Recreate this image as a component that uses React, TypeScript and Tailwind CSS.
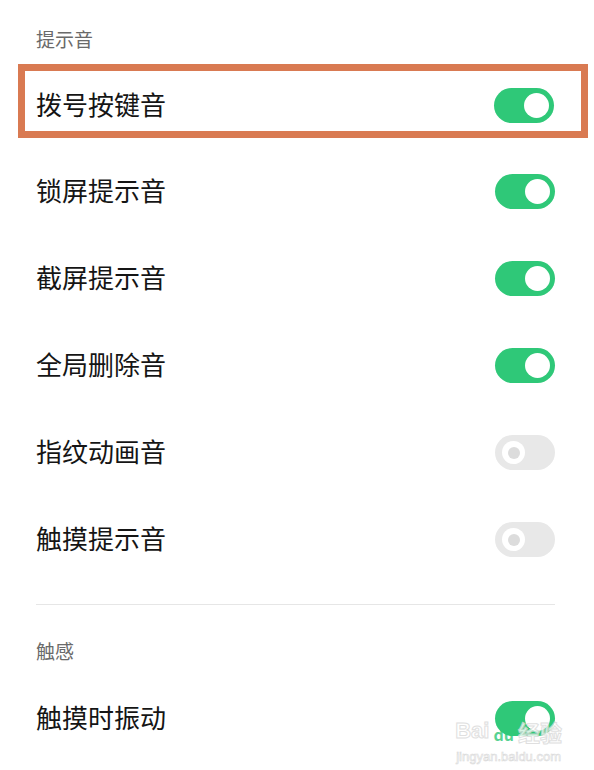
import React from 'react'

interface Item {
  label: string
  on: boolean
}

const soundItems: Item[] = [
  { label: '锁屏提示音', on: true },
  { label: '截屏提示音', on: true },
  { label: '全局删除音', on: true },
  { label: '指纹动画音', on: false },
  { label: '触摸提示音', on: false },
]

function Toggle({ on }: { on: boolean }) {
  if (on) {
    return (
      <div className="flex h-[35px] w-[60px] shrink-0 items-center justify-end rounded-full bg-[#2fc878] pr-[5px]">
        <div className="h-[25px] w-[25px] rounded-full bg-white" />
      </div>
    )
  }
  return (
    <div className="flex h-[35px] w-[60px] shrink-0 items-center rounded-full bg-[#e8e8e8] pl-[7px]">
      <div className="flex h-[23px] w-[23px] items-center justify-center rounded-full bg-white">
        <div className="h-[12px] w-[12px] rounded-full bg-[#dcdcdc]" />
      </div>
    </div>
  )
}

function Row({ item }: { item: Item }) {
  return (
    <div className="flex h-[87px] items-center justify-between pl-[36px] pr-[39px]">
      <span className="-mt-[3px] text-[26px] leading-[32px] text-[#151515]">{item.label}</span>
      <Toggle on={item.on} />
    </div>
  )
}

export default function App() {
  return (
    <div
      className="relative h-[770px] w-[594px] overflow-hidden bg-white"
      style={{ fontFamily: '"Noto Sans CJK SC", "Noto Sans", sans-serif' }}
    >
      <div className="h-[61px] pl-[36px] pt-[27px]">
        <p className="text-[19px] leading-[24px] text-[#6a6a6a]">提示音</p>
      </div>

      {/* highlighted row */}
      <div className="h-[87px] pt-[3px]">
        <div className="ml-[18px] mr-[6px] flex h-[74px] items-center justify-between border-[7px] border-[#d97a52] pl-[11px] pr-[27px] pt-2">
          <span className="-mt-[3px] text-[26px] leading-[32px] text-[#151515]">拨号按键音</span>
          <Toggle on={true} />
        </div>
      </div>

      {soundItems.map((item) => (
        <Row key={item.label} item={item} />
      ))}

      <div className="ml-[36px] mr-[39px] mt-[21px] h-px bg-[#e6e6e6]" />

      <div className="h-[59px] pl-[36px] pt-[34px]">
        <p className="text-[19px] leading-[24px] text-[#6a6a6a]">触感</p>
      </div>

      <div className="mt-[11px]">
        <Row item={{ label: '触摸时振动', on: true }} />
      </div>

      {/* watermark */}
      <div className="absolute bottom-[6px] right-[32px] flex flex-col items-center gap-[5px] opacity-80">
        <div className="flex items-end gap-1 text-[22px] font-bold leading-[26px] text-white [-webkit-text-stroke:1px_#d8d8d8]">
          <span style={{ fontFamily: '"Liberation Sans", sans-serif' }}>Bai</span>
          <span className="text-[16px] leading-[20px] text-[#2fc878] [-webkit-text-stroke:0px]">du</span>
          <span>经验</span>
        </div>
        <span
          className="text-[13px] leading-[15px] text-white [-webkit-text-stroke:0.6px_#d0d0d0]"
          style={{ fontFamily: '"Liberation Sans", sans-serif' }}
        >
          jingyan.baidu.com
        </span>
      </div>
    </div>
  )
}
